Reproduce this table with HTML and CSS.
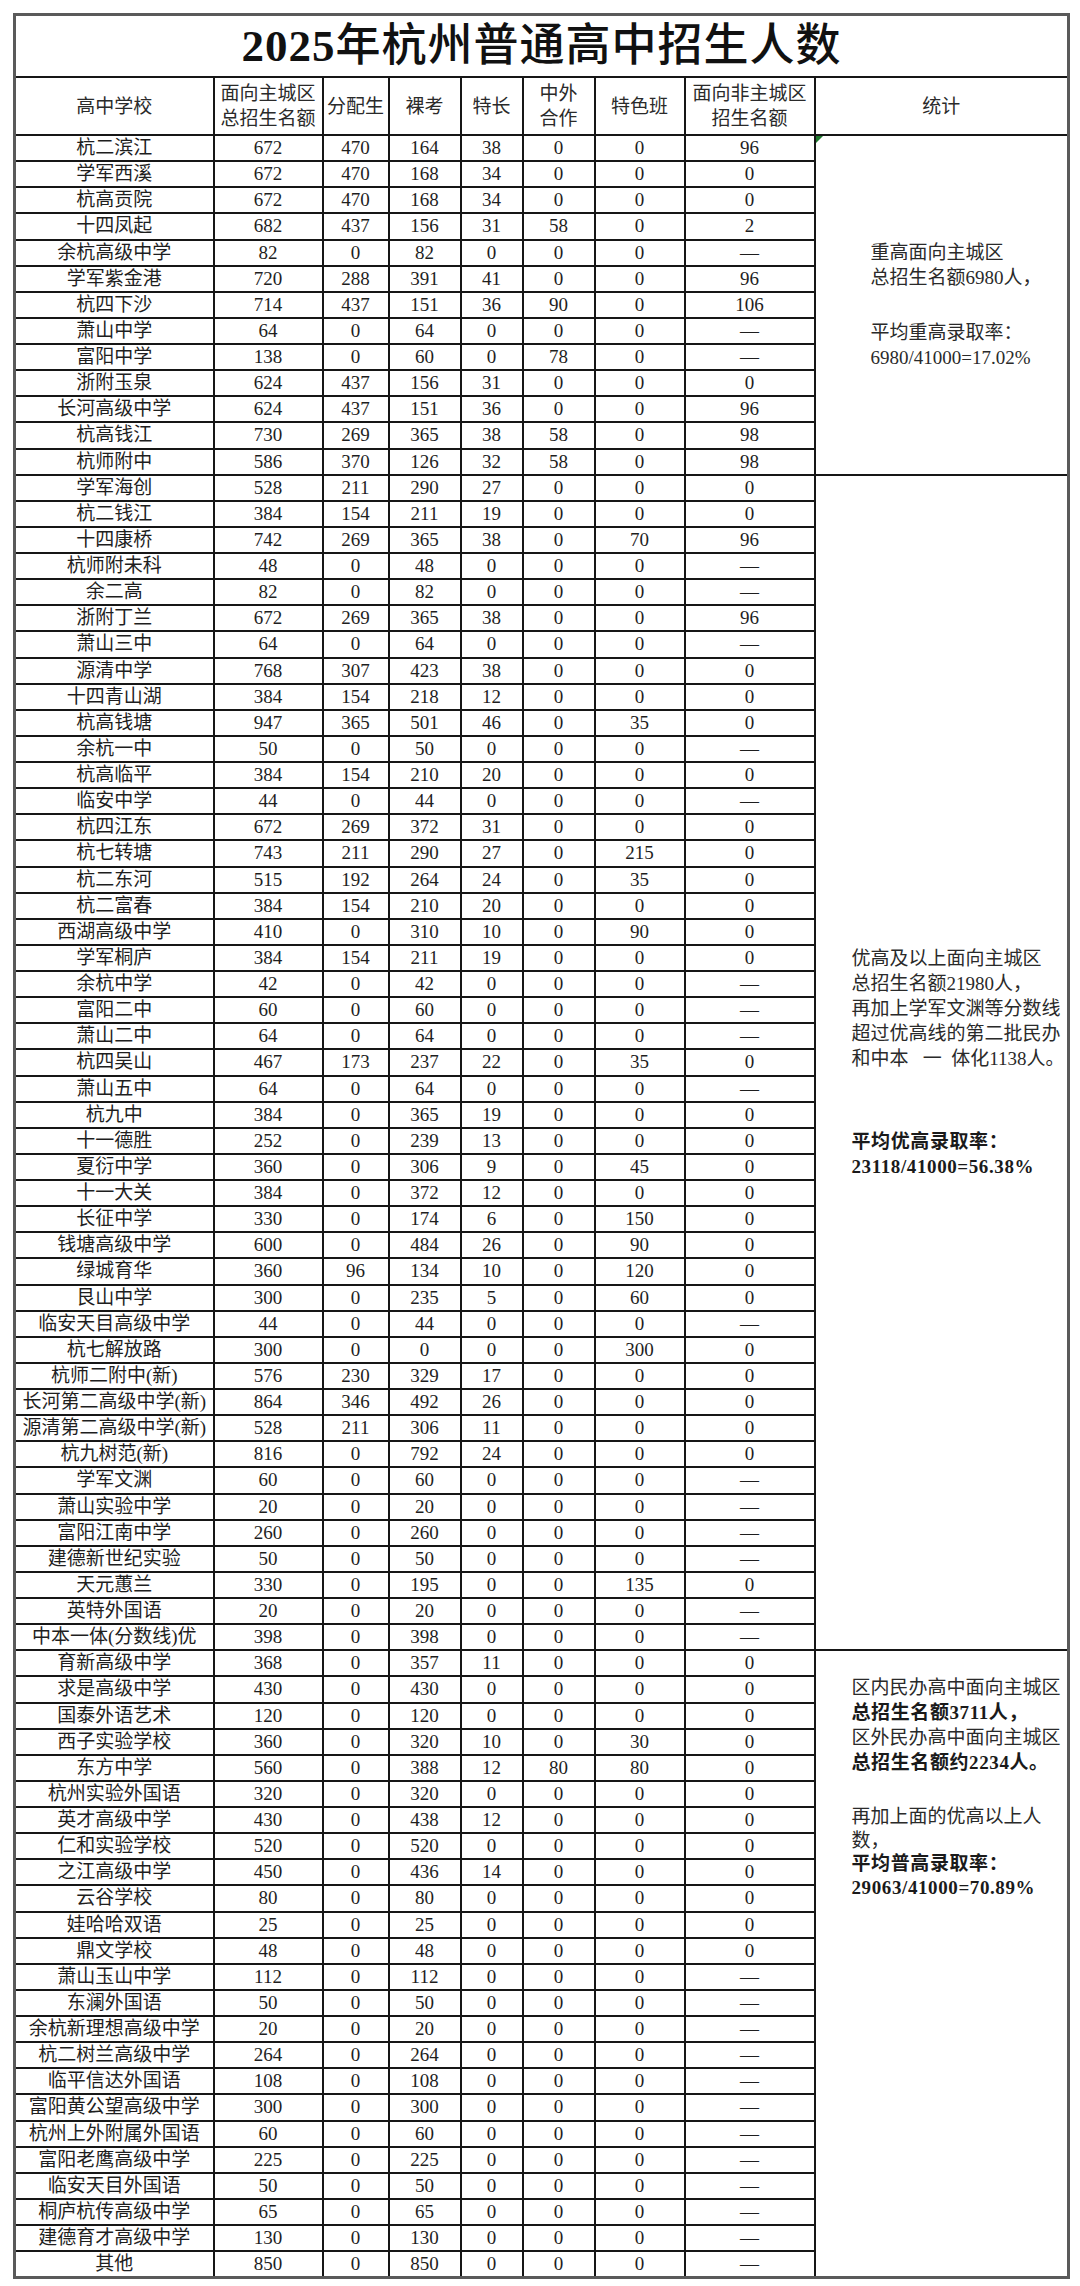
FILE: index.html
```html
<!DOCTYPE html>
<html lang="zh-CN">
<head>
<meta charset="utf-8">
<title>2025年杭州普通高中招生人数</title>
<link rel="stylesheet" href="styles.css">
</head>
<body>
<div class="page">
<table class="sheet">
<colgroup>
<col class="c-name"><col class="c-total"><col class="c-alloc"><col class="c-exam"><col class="c-talent"><col class="c-coop"><col class="c-feature"><col class="c-other"><col class="c-stat">
</colgroup>
<thead>
<tr class="title-row"><td colspan="9"><span class="title-num">2025</span>年杭州普通高中招生人数</td></tr>
<tr class="head-row">
<th>高中学校</th>
<th>面向主城区<br>总招生名额</th>
<th>分配生</th>
<th>裸考</th>
<th>特长</th>
<th>中外<br>合作</th>
<th>特色班</th>
<th>面向非主城区<br>招生名额</th>
<th>统计</th>
</tr>
</thead>
<tbody>
<tr><td>杭二滨江</td><td>672</td><td>470</td><td>164</td><td>38</td><td>0</td><td>0</td><td>96</td>
<td class="stat stat-key" rowspan="13"><span class="flag"></span>
<div class="para">
<div class="ln">重高面向主城区</div>
<div class="ln">总招生名额6980人，</div>
</div>
<div class="para gap1">
<div class="ln">平均重高录取率：</div>
<div class="ln">6980/41000=17.02%</div>
</div>
</td></tr>
<tr><td>学军西溪</td><td>672</td><td>470</td><td>168</td><td>34</td><td>0</td><td>0</td><td>0</td></tr>
<tr><td>杭高贡院</td><td>672</td><td>470</td><td>168</td><td>34</td><td>0</td><td>0</td><td>0</td></tr>
<tr><td>十四凤起</td><td>682</td><td>437</td><td>156</td><td>31</td><td>58</td><td>0</td><td>2</td></tr>
<tr><td>余杭高级中学</td><td>82</td><td>0</td><td>82</td><td>0</td><td>0</td><td>0</td><td>—</td></tr>
<tr><td>学军紫金港</td><td>720</td><td>288</td><td>391</td><td>41</td><td>0</td><td>0</td><td>96</td></tr>
<tr><td>杭四下沙</td><td>714</td><td>437</td><td>151</td><td>36</td><td>90</td><td>0</td><td>106</td></tr>
<tr><td>萧山中学</td><td>64</td><td>0</td><td>64</td><td>0</td><td>0</td><td>0</td><td>—</td></tr>
<tr><td>富阳中学</td><td>138</td><td>0</td><td>60</td><td>0</td><td>78</td><td>0</td><td>—</td></tr>
<tr><td>浙附玉泉</td><td>624</td><td>437</td><td>156</td><td>31</td><td>0</td><td>0</td><td>0</td></tr>
<tr><td>长河高级中学</td><td>624</td><td>437</td><td>151</td><td>36</td><td>0</td><td>0</td><td>96</td></tr>
<tr><td>杭高钱江</td><td>730</td><td>269</td><td>365</td><td>38</td><td>58</td><td>0</td><td>98</td></tr>
<tr><td>杭师附中</td><td>586</td><td>370</td><td>126</td><td>32</td><td>58</td><td>0</td><td>98</td></tr>
<tr><td>学军海创</td><td>528</td><td>211</td><td>290</td><td>27</td><td>0</td><td>0</td><td>0</td>
<td class="stat stat-good" rowspan="45">
<div class="para">
<div class="ln">优高及以上面向主城区</div>
<div class="ln">总招生名额21980人，</div>
<div class="ln">再加上学军文渊等分数线</div>
<div class="ln">超过优高线的第二批民办</div>
<div class="ln pre">和中本   一  体化1138人。</div>
</div>
<div class="para gap3 strong">
<div class="ln">平均优高录取率：</div>
<div class="ln">23118/41000=56.38%</div>
</div>
</td></tr>
<tr><td>杭二钱江</td><td>384</td><td>154</td><td>211</td><td>19</td><td>0</td><td>0</td><td>0</td></tr>
<tr><td>十四康桥</td><td>742</td><td>269</td><td>365</td><td>38</td><td>0</td><td>70</td><td>96</td></tr>
<tr><td>杭师附未科</td><td>48</td><td>0</td><td>48</td><td>0</td><td>0</td><td>0</td><td>—</td></tr>
<tr><td>余二高</td><td>82</td><td>0</td><td>82</td><td>0</td><td>0</td><td>0</td><td>—</td></tr>
<tr><td>浙附丁兰</td><td>672</td><td>269</td><td>365</td><td>38</td><td>0</td><td>0</td><td>96</td></tr>
<tr><td>萧山三中</td><td>64</td><td>0</td><td>64</td><td>0</td><td>0</td><td>0</td><td>—</td></tr>
<tr><td>源清中学</td><td>768</td><td>307</td><td>423</td><td>38</td><td>0</td><td>0</td><td>0</td></tr>
<tr><td>十四青山湖</td><td>384</td><td>154</td><td>218</td><td>12</td><td>0</td><td>0</td><td>0</td></tr>
<tr><td>杭高钱塘</td><td>947</td><td>365</td><td>501</td><td>46</td><td>0</td><td>35</td><td>0</td></tr>
<tr><td>余杭一中</td><td>50</td><td>0</td><td>50</td><td>0</td><td>0</td><td>0</td><td>—</td></tr>
<tr><td>杭高临平</td><td>384</td><td>154</td><td>210</td><td>20</td><td>0</td><td>0</td><td>0</td></tr>
<tr><td>临安中学</td><td>44</td><td>0</td><td>44</td><td>0</td><td>0</td><td>0</td><td>—</td></tr>
<tr><td>杭四江东</td><td>672</td><td>269</td><td>372</td><td>31</td><td>0</td><td>0</td><td>0</td></tr>
<tr><td>杭七转塘</td><td>743</td><td>211</td><td>290</td><td>27</td><td>0</td><td>215</td><td>0</td></tr>
<tr><td>杭二东河</td><td>515</td><td>192</td><td>264</td><td>24</td><td>0</td><td>35</td><td>0</td></tr>
<tr><td>杭二富春</td><td>384</td><td>154</td><td>210</td><td>20</td><td>0</td><td>0</td><td>0</td></tr>
<tr><td>西湖高级中学</td><td>410</td><td>0</td><td>310</td><td>10</td><td>0</td><td>90</td><td>0</td></tr>
<tr><td>学军桐庐</td><td>384</td><td>154</td><td>211</td><td>19</td><td>0</td><td>0</td><td>0</td></tr>
<tr><td>余杭中学</td><td>42</td><td>0</td><td>42</td><td>0</td><td>0</td><td>0</td><td>—</td></tr>
<tr><td>富阳二中</td><td>60</td><td>0</td><td>60</td><td>0</td><td>0</td><td>0</td><td>—</td></tr>
<tr><td>萧山二中</td><td>64</td><td>0</td><td>64</td><td>0</td><td>0</td><td>0</td><td>—</td></tr>
<tr><td>杭四吴山</td><td>467</td><td>173</td><td>237</td><td>22</td><td>0</td><td>35</td><td>0</td></tr>
<tr><td>萧山五中</td><td>64</td><td>0</td><td>64</td><td>0</td><td>0</td><td>0</td><td>—</td></tr>
<tr><td>杭九中</td><td>384</td><td>0</td><td>365</td><td>19</td><td>0</td><td>0</td><td>0</td></tr>
<tr><td>十一德胜</td><td>252</td><td>0</td><td>239</td><td>13</td><td>0</td><td>0</td><td>0</td></tr>
<tr><td>夏衍中学</td><td>360</td><td>0</td><td>306</td><td>9</td><td>0</td><td>45</td><td>0</td></tr>
<tr><td>十一大关</td><td>384</td><td>0</td><td>372</td><td>12</td><td>0</td><td>0</td><td>0</td></tr>
<tr><td>长征中学</td><td>330</td><td>0</td><td>174</td><td>6</td><td>0</td><td>150</td><td>0</td></tr>
<tr><td>钱塘高级中学</td><td>600</td><td>0</td><td>484</td><td>26</td><td>0</td><td>90</td><td>0</td></tr>
<tr><td>绿城育华</td><td>360</td><td>96</td><td>134</td><td>10</td><td>0</td><td>120</td><td>0</td></tr>
<tr><td>艮山中学</td><td>300</td><td>0</td><td>235</td><td>5</td><td>0</td><td>60</td><td>0</td></tr>
<tr><td>临安天目高级中学</td><td>44</td><td>0</td><td>44</td><td>0</td><td>0</td><td>0</td><td>—</td></tr>
<tr><td>杭七解放路</td><td>300</td><td>0</td><td>0</td><td>0</td><td>0</td><td>300</td><td>0</td></tr>
<tr><td>杭师二附中(新)</td><td>576</td><td>230</td><td>329</td><td>17</td><td>0</td><td>0</td><td>0</td></tr>
<tr><td>长河第二高级中学(新)</td><td>864</td><td>346</td><td>492</td><td>26</td><td>0</td><td>0</td><td>0</td></tr>
<tr><td>源清第二高级中学(新)</td><td>528</td><td>211</td><td>306</td><td>11</td><td>0</td><td>0</td><td>0</td></tr>
<tr><td>杭九树范(新)</td><td>816</td><td>0</td><td>792</td><td>24</td><td>0</td><td>0</td><td>0</td></tr>
<tr><td>学军文渊</td><td>60</td><td>0</td><td>60</td><td>0</td><td>0</td><td>0</td><td>—</td></tr>
<tr><td>萧山实验中学</td><td>20</td><td>0</td><td>20</td><td>0</td><td>0</td><td>0</td><td>—</td></tr>
<tr><td>富阳江南中学</td><td>260</td><td>0</td><td>260</td><td>0</td><td>0</td><td>0</td><td>—</td></tr>
<tr><td>建德新世纪实验</td><td>50</td><td>0</td><td>50</td><td>0</td><td>0</td><td>0</td><td>—</td></tr>
<tr><td>天元蕙兰</td><td>330</td><td>0</td><td>195</td><td>0</td><td>0</td><td>135</td><td>0</td></tr>
<tr><td>英特外国语</td><td>20</td><td>0</td><td>20</td><td>0</td><td>0</td><td>0</td><td>—</td></tr>
<tr><td>中本一体(分数线)优</td><td>398</td><td>0</td><td>398</td><td>0</td><td>0</td><td>0</td><td>—</td></tr>
<tr><td>育新高级中学</td><td>368</td><td>0</td><td>357</td><td>11</td><td>0</td><td>0</td><td>0</td>
<td class="stat stat-private" rowspan="24">
<div class="para">
<div class="ln">区内民办高中面向主城区</div>
<div class="ln strong">总招生名额3711人，</div>
<div class="ln">区外民办高中面向主城区</div>
<div class="ln strong">总招生名额约2234人。</div>
</div>
<div class="para gap1 tight">
<div class="ln">再加上面的优高以上人</div>
<div class="ln">数，</div>
<div class="ln strong">平均普高录取率：</div>
<div class="ln strong">29063/41000=70.89%</div>
</div>
</td></tr>
<tr><td>求是高级中学</td><td>430</td><td>0</td><td>430</td><td>0</td><td>0</td><td>0</td><td>0</td></tr>
<tr><td>国泰外语艺术</td><td>120</td><td>0</td><td>120</td><td>0</td><td>0</td><td>0</td><td>0</td></tr>
<tr><td>西子实验学校</td><td>360</td><td>0</td><td>320</td><td>10</td><td>0</td><td>30</td><td>0</td></tr>
<tr><td>东方中学</td><td>560</td><td>0</td><td>388</td><td>12</td><td>80</td><td>80</td><td>0</td></tr>
<tr><td>杭州实验外国语</td><td>320</td><td>0</td><td>320</td><td>0</td><td>0</td><td>0</td><td>0</td></tr>
<tr><td>英才高级中学</td><td>430</td><td>0</td><td>438</td><td>12</td><td>0</td><td>0</td><td>0</td></tr>
<tr><td>仁和实验学校</td><td>520</td><td>0</td><td>520</td><td>0</td><td>0</td><td>0</td><td>0</td></tr>
<tr><td>之江高级中学</td><td>450</td><td>0</td><td>436</td><td>14</td><td>0</td><td>0</td><td>0</td></tr>
<tr><td>云谷学校</td><td>80</td><td>0</td><td>80</td><td>0</td><td>0</td><td>0</td><td>0</td></tr>
<tr><td>娃哈哈双语</td><td>25</td><td>0</td><td>25</td><td>0</td><td>0</td><td>0</td><td>0</td></tr>
<tr><td>鼎文学校</td><td>48</td><td>0</td><td>48</td><td>0</td><td>0</td><td>0</td><td>0</td></tr>
<tr><td>萧山玉山中学</td><td>112</td><td>0</td><td>112</td><td>0</td><td>0</td><td>0</td><td>—</td></tr>
<tr><td>东澜外国语</td><td>50</td><td>0</td><td>50</td><td>0</td><td>0</td><td>0</td><td>—</td></tr>
<tr><td>余杭新理想高级中学</td><td>20</td><td>0</td><td>20</td><td>0</td><td>0</td><td>0</td><td>—</td></tr>
<tr><td>杭二树兰高级中学</td><td>264</td><td>0</td><td>264</td><td>0</td><td>0</td><td>0</td><td>—</td></tr>
<tr><td>临平信达外国语</td><td>108</td><td>0</td><td>108</td><td>0</td><td>0</td><td>0</td><td>—</td></tr>
<tr><td>富阳黄公望高级中学</td><td>300</td><td>0</td><td>300</td><td>0</td><td>0</td><td>0</td><td>—</td></tr>
<tr><td>杭州上外附属外国语</td><td>60</td><td>0</td><td>60</td><td>0</td><td>0</td><td>0</td><td>—</td></tr>
<tr><td>富阳老鹰高级中学</td><td>225</td><td>0</td><td>225</td><td>0</td><td>0</td><td>0</td><td>—</td></tr>
<tr><td>临安天目外国语</td><td>50</td><td>0</td><td>50</td><td>0</td><td>0</td><td>0</td><td>—</td></tr>
<tr><td>桐庐杭传高级中学</td><td>65</td><td>0</td><td>65</td><td>0</td><td>0</td><td>0</td><td>—</td></tr>
<tr><td>建德育才高级中学</td><td>130</td><td>0</td><td>130</td><td>0</td><td>0</td><td>0</td><td>—</td></tr>
<tr><td>其他</td><td>850</td><td>0</td><td>850</td><td>0</td><td>0</td><td>0</td><td>—</td></tr>
</tbody>
</table>
</div>
</body>
</html>
```
FILE: styles.css
```css
html, body {
  margin: 0;
  padding: 0;
  background: #ffffff;
}

.page {
  padding: 13px 0 0 13px;
}

.sheet {
  border-collapse: collapse;
  table-layout: fixed;
  width: 1054px;
  border: 3px solid #5a5a5a;
  font-family: "Liberation Serif", "Noto Sans CJK SC", serif;
  font-size: 19px;
  color: #1e1e1e;
}

.c-name { width: 199px; }
.c-total { width: 109px; }
.c-alloc { width: 66px; }
.c-exam { width: 72px; }
.c-talent { width: 62px; }
.c-coop { width: 72px; }
.c-feature { width: 90px; }
.c-other { width: 130px; }
.c-stat { width: 254px; }

.sheet td,
.sheet th {
  border: 2px solid #161616;
  padding: 0;
  text-align: center;
  vertical-align: middle;
  font-weight: normal;
  line-height: 24px;
  white-space: nowrap;
  overflow: hidden;
}

.sheet .title-row td {
  height: 60px;
  font-size: 45px;
  line-height: 56px;
  font-weight: 500;
  color: #111;
  letter-spacing: 1px;
}

.title-num {
  font-weight: bold;
}

.sheet .head-row th {
  height: 56px;
  line-height: 25px;
  color: #2a2a2a;
}

.sheet tbody tr {
  height: 26.13px;
}

.sheet td.stat {
  position: relative;
  text-align: left;
  white-space: nowrap;
  line-height: 25px;
  color: #2a2a2a;
}

.sheet td.stat-key {
  padding-left: 55px;
  vertical-align: middle;
}

.sheet td.stat-good {
  padding-left: 36px;
  vertical-align: middle;
}

.sheet td.stat-private {
  padding-left: 36px;
  padding-top: 24px;
  vertical-align: top;
}

.ln {
  height: 25px;
}

.pre {
  white-space: pre;
}

.gap1 {
  margin-top: 30px;
}

.gap3 {
  margin-top: 58px;
}

.tight .ln {
  height: 23.5px;
  line-height: 23.5px;
}

.strong {
  font-weight: bold;
  color: #1a1a1a;
  letter-spacing: 0.6px;
}

.flag {
  position: absolute;
  left: 0;
  top: 0;
  width: 0;
  height: 0;
  border-top: 7px solid #1f7a2e;
  border-right: 7px solid transparent;
}
```
